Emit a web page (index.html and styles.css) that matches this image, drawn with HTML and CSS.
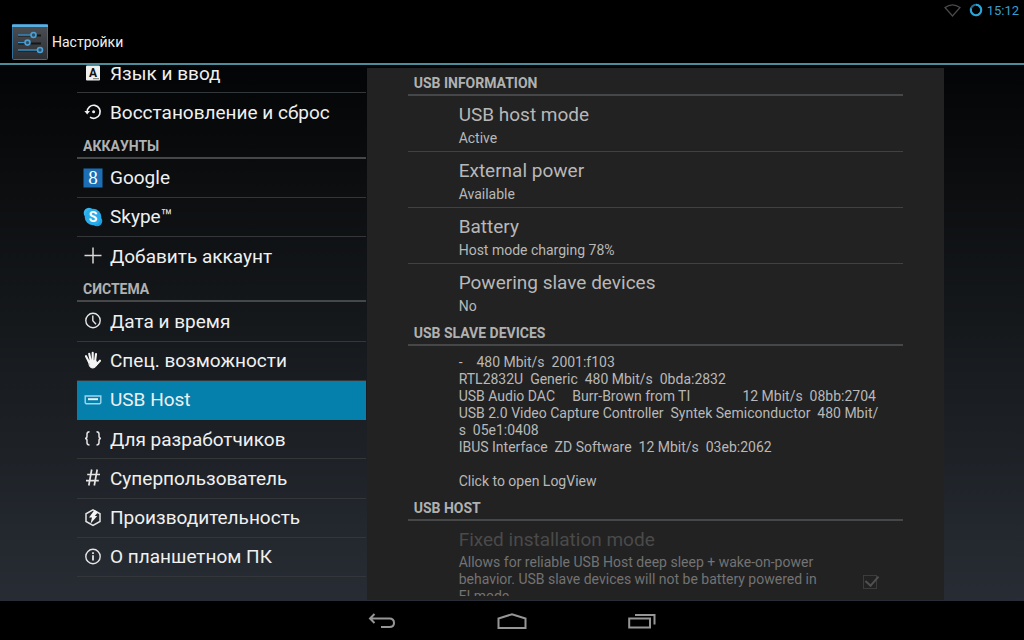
FILE: index.html
```html
<!DOCTYPE html>
<html lang="ru">
<head>
    <meta charset="UTF-8">
    <meta name="viewport" content="width=device-width, initial-scale=1">
    <title>Настройки</title>
    <link rel="stylesheet" href="styles.css">
</head>
<body>

<div class="status-bar">
    <svg width="17" height="13" viewBox="0 0 17 13" fill="none" stroke="#4a4a4a" stroke-width="1.2"><path d="M1 3.5 Q8.5 -1.8 16 3.5 L8.5 12 Z"/></svg>
    <svg class="battery" width="14" height="14" viewBox="0 0 14 14" fill="none" stroke-width="2"><circle cx="7" cy="7" r="5.2" stroke="#1a7299"/><path d="M7 1.8 A5.2 5.2 0 1 1 2 5.6" stroke="#2ba6d6"/></svg>
    <span class="clock">15:12</span>
</div>

<header class="action-bar">
    <svg class="app-icon" width="36" height="36" viewBox="0 0 36 36">
        <defs>
            <linearGradient id="tile" x1="0" y1="0" x2="0" y2="1">
                <stop offset="0" stop-color="#4c5054"/>
                <stop offset="1" stop-color="#2c2f33"/>
            </linearGradient>
        </defs>
        <rect x="0.5" y="0.5" width="35" height="35" rx="1" fill="url(#tile)" stroke="#2f6f99"/>
        <path d="M0 0.5 H36 V3 H0 Z" fill="#5aaee0"/>
        <g fill="none" stroke="#15181b" stroke-width="2"><path d="M6 11.5 H29 M6 19.5 H29 M6 26.5 H29"/></g>
        <g fill="none" stroke="#3f8fc4" stroke-width="1.4"><path d="M6 11 H19 M6 18.6 H13 M6 26 H25"/></g>
        <g fill="#2c4f66" stroke="#4ba0d6" stroke-width="1.6"><circle cx="21.5" cy="11" r="2.5"/><circle cx="15.5" cy="18.6" r="2.5"/><circle cx="28" cy="26" r="2.5"/></g>
    </svg>
    <h1>Настройки</h1>
</header>

<main class="content">
    <nav class="sidebar">
        <a class="item" href="#language">
            <svg viewBox="0 0 20 20"><rect x="3" y="2.5" width="14" height="15" rx="1" fill="#f0f0f0"/><text x="10" y="14" text-anchor="middle" class="key-letter">A</text><path d="M10 15.7 H16" stroke="#777"/></svg>
            <span>Язык и ввод</span>
        </a>
        <a class="item" href="#backup">
            <svg viewBox="0 0 20 20" fill="none" stroke="#f0f0f0" stroke-width="1.7"><path d="M4.2 10 A6.5 6.5 0 1 1 7 15.1"/><path d="M1.4 9 H7 L4.2 12.4 Z" fill="#f0f0f0" stroke="none"/><circle cx="10.6" cy="9.8" r="1.5" fill="#f0f0f0" stroke="none"/></svg>
            <span>Восстановление и сброс</span>
        </a>
        <h2>АККАУНТЫ</h2>
        <a class="item" href="#google">
            <svg viewBox="0 0 20 20"><rect x="0.5" y="0.5" width="19" height="19" fill="#1c6fb5"/><text x="10" y="16" text-anchor="middle" class="google-mark">8</text></svg>
            <span>Google</span>
        </a>
        <a class="item" href="#skype">
            <svg viewBox="0 0 20 20"><circle cx="6" cy="6" r="5.3" fill="#35b8f0"/><circle cx="14" cy="14" r="5.3" fill="#1c9fe0"/><circle cx="10" cy="10" r="8.3" fill="#28adec"/><text x="10" y="15" text-anchor="middle" class="skype-mark">S</text></svg>
            <span>Skype™</span>
        </a>
        <a class="item" href="#add-account">
            <svg viewBox="0 0 20 20" stroke="#d8d8d8" stroke-width="1.5"><path d="M1.5 9.5 H18.5 M10 1.5 V17.5"/></svg>
            <span>Добавить аккаунт</span>
        </a>
        <h2>СИСТЕМА</h2>
        <a class="item" href="#date">
            <svg viewBox="0 0 20 20" fill="none" stroke="#e4e4e4" stroke-width="1.4"><circle cx="10" cy="9.5" r="7.2"/><path d="M9.8 4.5 V9.8 L13 13.2"/></svg>
            <span>Дата и время</span>
        </a>
        <a class="item" href="#accessibility">
            <svg viewBox="0 0 20 20" fill="none" stroke="#f4f4f4" stroke-width="2.1" stroke-linecap="round"><path d="M3 5.2 L6 11 M6.2 2.8 L7.8 10 M9.7 1.8 V10 M13 3 L12 10.5 M17 9.7 L13 14"/><path d="M5.6 10 L13 9.6 L13.6 11.8 L15.5 11.5 L12.8 15.6 Q9.5 18.6 6.8 15.6 Z" fill="#f4f4f4" stroke-width="1"/></svg>
            <span>Спец. возможности</span>
        </a>
        <a class="item selected" href="#usb-host">
            <svg viewBox="0 0 20 20" fill="none" stroke="#9fd8ee" stroke-width="1.4"><path d="M2.2 6 H17.8 V12.7 L16.8 13.8 H3.2 L2.2 12.7 Z"/><path d="M5 9.2 H15" stroke="#e6f6fc" stroke-width="2"/></svg>
            <span>USB Host</span>
        </a>
        <a class="item" href="#developer">
            <svg viewBox="0 0 20 20" fill="none" stroke="#e4e4e4" stroke-width="1.5"><path d="M6.5 2.7 Q4 2.7 4 5 V7.3 Q4 9.4 2 9.4 Q4 9.4 4 11.5 V13.8 Q4 16 6.5 16"/><path d="M13.5 2.7 Q16 2.7 16 5 V7.3 Q16 9.4 18 9.4 Q16 9.4 16 11.5 V13.8 Q16 16 13.5 16"/></svg>
            <span>Для разработчиков</span>
        </a>
        <a class="item" href="#superuser">
            <svg viewBox="0 0 20 20" fill="none" stroke="#e4e4e4" stroke-width="1.7"><path d="M8.7 1.5 L5.8 17.5 M14.2 1.5 L11.3 17.5 M4.2 6.5 H17 M3 12.7 H15.8"/></svg>
            <span>Суперпользователь</span>
        </a>
        <a class="item" href="#performance">
            <svg viewBox="0 0 20 20" fill="none" stroke="#e4e4e4" stroke-width="1.5"><path d="M10 1.8 L17 5.8 V13.5 L10 17.5 L3 13.5 V5.8 Z"/><path d="M11.5 2 L6 9.5 H9 L7.5 15.8 L14.2 8 H11.8 L15 4.2 Z" fill="#f4f4f4" stroke="none"/></svg>
            <span>Производительность</span>
        </a>
        <a class="item" href="#about">
            <svg viewBox="0 0 20 20" fill="none" stroke="#e4e4e4" stroke-width="1.4"><circle cx="10" cy="9.5" r="7.2"/><path d="M10 8.3 V13.5" stroke-width="1.8"/><path d="M10 5.3 V7" stroke-width="1.8"/></svg>
            <span>О планшетном ПК</span>
        </a>
    </nav>

    <section class="panel">
        <div class="prefs">
            <h2>USB INFORMATION</h2>
            <div class="pref">
                <h3>USB host mode</h3>
                <p>Active</p>
            </div>
            <div class="pref">
                <h3>External power</h3>
                <p>Available</p>
            </div>
            <div class="pref">
                <h3>Battery</h3>
                <p>Host mode charging 78%</p>
            </div>
            <div class="pref">
                <h3>Powering slave devices</h3>
                <p>No</p>
            </div>

            <h2>USB SLAVE DEVICES</h2>
            <a class="devices" href="#logview">-    480 Mbit/s  2001:f103
RTL2832U  Generic  480 Mbit/s  0bda:2832
USB Audio DAC     Burr-Brown from TI               12 Mbit/s  08bb:2704
USB 2.0 Video Capture Controller  Syntek Semiconductor  480 Mbit/
s  05e1:0408
IBUS Interface  ZD Software  12 Mbit/s  03eb:2062

Click to open LogView</a>

            <h2>USB HOST</h2>
            <div class="pref disabled">
                <label for="fixedMode">
                    <span class="title">Fixed installation mode</span>
                    <span class="summary">Allows for reliable USB Host deep sleep + wake-on-power behavior. USB slave devices will not be battery powered in FI mode.</span>
                </label>
                <input type="checkbox" id="fixedMode" checked disabled>
            </div>
        </div>
    </section>
</main>

<footer class="nav-bar">
    <button aria-label="Назад"><svg width="28" height="16" viewBox="0 0 28 16"><path d="M6.5 1 L2 5.5 L6.5 10 M2.5 5.5 H21.5 Q26 5.5 26 10 Q26 14 21.5 14 H13"/></svg></button>
    <button aria-label="Домой"><svg width="30" height="16" viewBox="0 0 30 16"><path d="M1.5 15 V5.5 L15 1.2 L28.5 5.5 V15 Z"/></svg></button>
    <button aria-label="Недавние"><svg width="28" height="16" viewBox="0 0 28 16"><path d="M1.2 5.5 H22 V14.5 H1.2 Z M7 2 H26.5 V11.5"/></svg></button>
</footer>

</body>
</html>
```
FILE: styles.css
```css
* {
    box-sizing: border-box;
}

body {
    display: flex;
    flex-direction: column;
    height: 100vh;
    margin: 0;
    overflow: hidden;
    font-family: Roboto, sans-serif;
    background: linear-gradient(to bottom, #000, #030405 10%, #15181b 50%, #282d35 95%);
    color: #f0f0f0;
}

h1, h2, h3, p {
    margin: 0;
    font-weight: 400;
}

a {
    color: inherit;
    text-decoration: none;
}

.status-bar {
    display: flex;
    flex: none;
    align-items: center;
    justify-content: flex-end;
    height: 20px;
    padding-right: 5px;
    background: #000;
}

.battery {
    margin: 0 4px 0 8px;
}

.clock {
    font-size: 13px;
    color: #3a9fcc;
}

.action-bar {
    display: flex;
    flex: none;
    align-items: center;
    gap: 4px;
    height: 45px;
    padding-left: 12px;
    background: #000;
    border-bottom: 2px solid #4d8c9b;
}

.action-bar h1 {
    padding-top: 1px;
    font-size: 14px;
}

.content {
    display: grid;
    grid-template-columns: 1fr 2fr;
    column-gap: 1px;
    flex: 1;
    min-height: 0;
    padding: 0 80px 0 77px;
}

/* list is scrolled a little, first row goes under the bar */
.sidebar {
    display: flex;
    flex-direction: column;
    min-height: 0;
    padding-bottom: 24px;
    overflow: hidden;
}

.item:first-child {
    margin-top: -11px;
}

h2 {
    flex: none;
    height: 26px;
    padding-left: 6px;
    border-bottom: 2px solid #454749;
    font-size: 14px;
    font-weight: 700;
    line-height: 26px;
    color: #b0b1b2;
}

.item {
    display: flex;
    flex: 1 0 39px;
    align-items: center;
    gap: 7px;
    padding-left: 6px;
    border-bottom: 1px solid #33373a;
    font-size: 19px;
}

.item:has(+ h2) {
    border-bottom-color: transparent;
}

.item svg {
    width: 20px;
    height: 20px;
}

.item.selected {
    background: #057fac;
    border-bottom-color: #057fac;
}

.key-letter {
    font: 700 12px Roboto, sans-serif;
    fill: #111;
}

.google-mark {
    font: 19px "Liberation Serif", serif;
    fill: #fff;
}

.skype-mark {
    font: 700 14px Roboto, sans-serif;
    fill: #fff;
}

.panel {
    min-height: 0;
    margin: 3px 0 1px;
    padding: 2px 41px 4px;
    background: #222;
}

.prefs {
    height: 100%;
    overflow: hidden;
    color: #b8b8b8;
}

.pref {
    height: 56px;
    padding: 7px 12px 0 51px;
    border-bottom: 1px solid #414141;
}

.pref:has(+ h2) {
    border-bottom-color: transparent;
}

h3, .title {
    font-size: 19px;
    line-height: 24px;
}

p, .summary, .devices {
    font-size: 14px;
    line-height: 17px;
}

.pref p {
    padding-top: 3px;
}

.devices {
    display: block;
    padding: 8px 12px 5px 51px;
    white-space: pre-wrap;
}

.pref.disabled {
    display: flex;
    align-items: center;
    justify-content: space-between;
    height: 116px;
    padding-right: 26px;
    color: #4a4a4a;
}

.disabled label {
    align-self: flex-start;
    width: 368px;
}

.title, .summary {
    display: block;
}

.summary {
    padding-top: 2px;
    color: #737373;
}

input[type="checkbox"] {
    display: grid;
    place-items: center;
    width: 14px;
    height: 14px;
    margin: 0;
    appearance: none;
    border: 1px solid #3c3c3c;
}

input[type="checkbox"]::after {
    content: "";
    width: 6px;
    height: 11px;
    margin: -6px 0 0 3px;
    border: solid #505050;
    border-width: 0 2px 2px 0;
    transform: rotate(42deg);
}

.nav-bar {
    display: flex;
    flex: none;
    justify-content: center;
    height: 39px;
    background: #000;
}

.nav-bar button {
    width: 130px;
    padding: 4px 1px 0 0;
    border: none;
    background: none;
}

.nav-bar svg {
    fill: none;
    stroke: #969696;
    stroke-width: 2;
}
```
